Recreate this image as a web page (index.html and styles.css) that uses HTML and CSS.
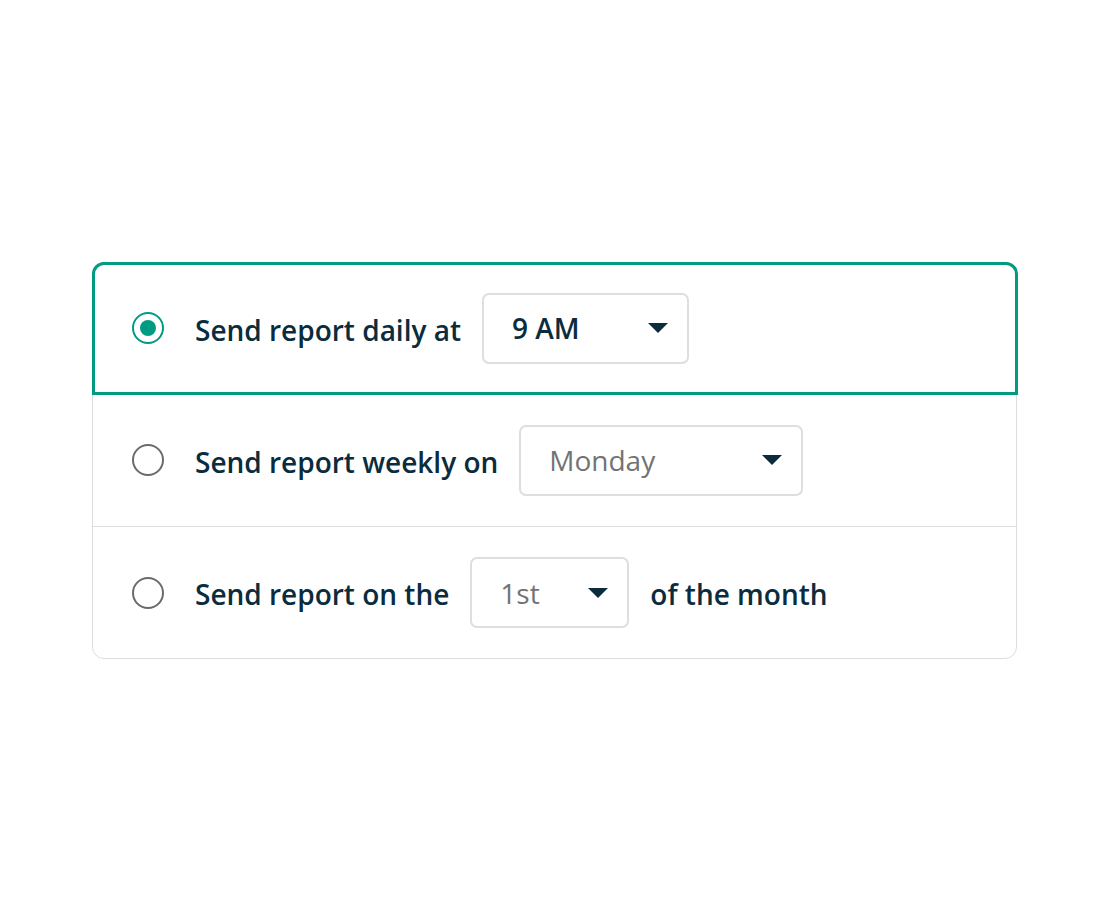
FILE: index.html
```html
<!DOCTYPE html>
<html lang="en">
<head>
<meta charset="utf-8">
<title>Report schedule</title>
<link rel="stylesheet" href="styles.css">
</head>
<body>
<main class="page">
  <div class="card" role="radiogroup">
    <div class="row row--selected">
      <span class="radio radio--on"></span>
      <span class="label">Send report daily at</span>
      <div class="select select--time">
        <span class="value">9 AM</span>
        <svg class="caret" width="20" height="10" viewBox="0 0 20 10"><path d="M0 0H20L10 10Z"/></svg>
      </div>
    </div>
    <div class="row row--plain">
      <span class="radio"></span>
      <span class="label">Send report weekly on</span>
      <div class="select select--day">
        <span class="value value--placeholder">Monday</span>
        <svg class="caret" width="20" height="10" viewBox="0 0 20 10"><path d="M0 0H20L10 10Z"/></svg>
      </div>
    </div>
    <div class="row row--divided">
      <span class="radio"></span>
      <span class="label">Send report on the</span>
      <div class="select select--date">
        <span class="value value--placeholder">1st</span>
        <svg class="caret" width="20" height="10" viewBox="0 0 20 10"><path d="M0 0H20L10 10Z"/></svg>
      </div>
      <span class="label">of the month</span>
    </div>
  </div>
</main>
</body>
</html>
```

FILE: styles.css
```css
* { box-sizing: border-box; }
html, body { margin: 0; padding: 0; background: #ffffff; }
body {
  font-family: "Open Sans", "Noto Sans", sans-serif;
  color: #0b2c3d;
}
.page {
  height: 920px;
  display: flex;
  align-items: center;
  justify-content: center;
  padding-left: 1px;
}
.card {
  width: 925px;
  border: 1px solid #dddddd;
  border-radius: 12px;
  display: flex;
  flex-direction: column;
}
.row {
  display: flex;
  align-items: center;
}
.row--selected {
  margin: -1px -2px 0 -1px;
  height: 133px;
  padding-left: 37px;
  border: 3px solid #009b82;
  border-radius: 12px 12px 0 0;
}
.row--plain {
  height: 131px;
  padding-left: 39px;
}
.row--divided {
  height: 132px;
  padding-left: 39px;
  padding-top: 1px;
  border-top: 1px solid #dddddd;
}
.radio {
  width: 32px;
  height: 32px;
  border: 2px solid #6b6b6b;
  border-radius: 50%;
  flex: none;
  margin-right: 31px;
  display: flex;
  align-items: center;
  justify-content: center;
}
.radio--on { border-color: #009b82; }
.radio--on::after {
  content: "";
  width: 16px;
  height: 16px;
  border-radius: 50%;
  background: #009b82;
}
.label {
  font-size: 28px;
  font-weight: 600;
  line-height: 1;
  padding-top: 3px;
  white-space: nowrap;
}
.select {
  height: 71px;
  border: 2px solid #dedede;
  border-radius: 7px;
  display: flex;
  align-items: center;
  justify-content: space-between;
  padding: 0 19px 0 28px;
  margin: 0 21px 0 21px;
  flex: none;
}
.select--time { width: 207px; }
.select--day { width: 284px; }
.select--date { width: 159px; }
.value {
  font-size: 28px;
  font-weight: 600;
  line-height: 1;
}
.value--placeholder { font-weight: 400; color: #737373; }
.caret { fill: #0b2c3d; flex: none; }
```
